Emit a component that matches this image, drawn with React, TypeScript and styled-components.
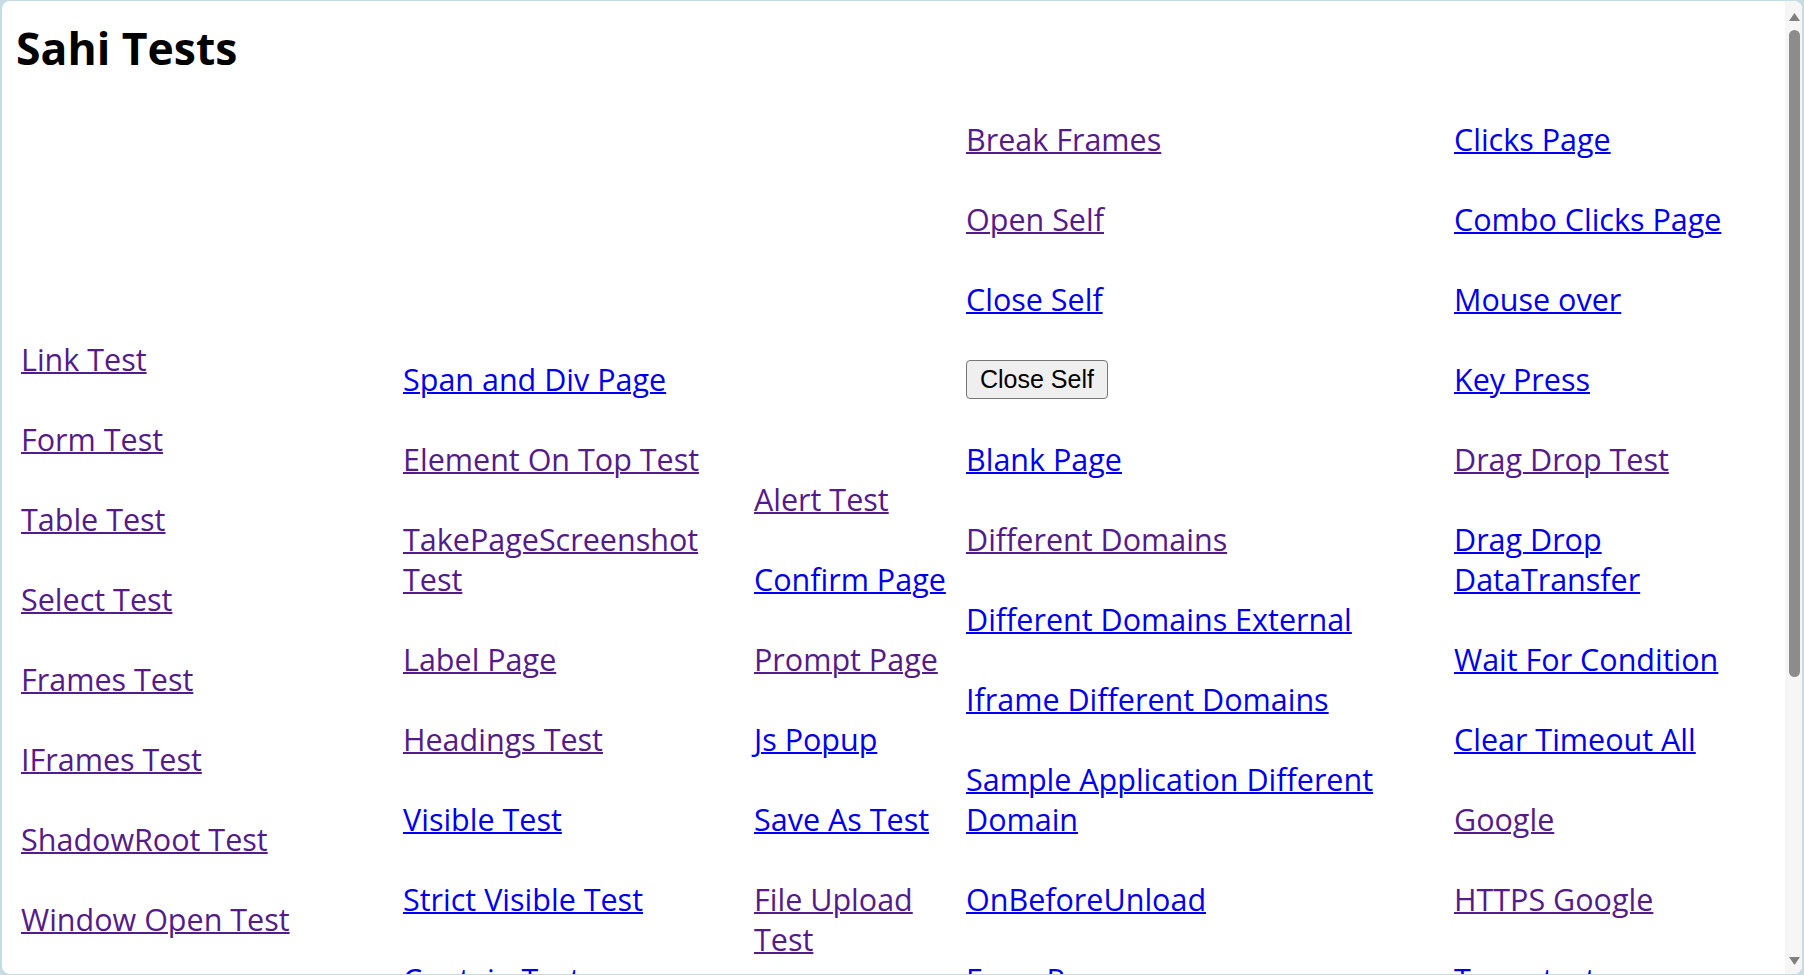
import React from "react";
import styled, { createGlobalStyle } from "styled-components";

const GlobalStyle = createGlobalStyle`
  html, body {
    margin: 0;
    padding: 0;
    height: 100%;
    overflow: hidden;
    background: #c6dce0;
  }
  #root {
    height: 100%;
  }
`;

const Frame = styled.div`
  box-sizing: border-box;
  height: 100vh;
  padding: 1px 2px 1px 2px;
`;

const Window = styled.div`
  height: 100%;
  display: flex;
  background: #ffffff;
  border-radius: 8px;
  overflow: hidden;
`;

const Page = styled.main`
  flex: 1;
  min-width: 0;
  overflow: hidden;
  padding-left: 14px;
  font-family: "Open Sans", "Noto Sans", sans-serif;
`;

const Title = styled.h1`
  margin: 20px 0 0;
  font-size: 44.5px;
  line-height: 54px;
  font-weight: 700;
  color: #000000;
`;

const LinkGrid = styled.div`
  display: grid;
  grid-template-columns: 382px 351px 212px 488px 1fr;
  align-items: start;
  margin-top: 44px;
  padding-left: 5px;
`;

const Column = styled.ul<{ $top: number }>`
  list-style: none;
  margin: 0;
  padding: ${(p) => p.$top}px 0 0;
  display: flex;
  flex-direction: column;
  gap: 40px;
`;

const Item = styled.li`
  font-size: 30.5px;
  line-height: 40px;
  white-space: nowrap;
`;

const TestLink = styled.a<{ $visited?: boolean }>`
  color: ${(p) => (p.$visited ? "#551a8b" : "#0000ee")};
  text-decoration: underline;
  text-decoration-thickness: 2px;
  cursor: pointer;
`;

const ButtonSlot = styled.li`
  height: 40px;
  display: flex;
  align-items: flex-start;
  padding-top: 1px;
  box-sizing: border-box;
`;

const PlainButton = styled.button`
  box-sizing: border-box;
  height: 39px;
  padding: 0 13px;
  font-family: "Liberation Sans", Arial, sans-serif;
  font-size: 25px;
  color: #000000;
  background: #efefef;
  border: 1px solid #767676;
  border-radius: 4px;
`;

const Scrollbar = styled.div`
  width: 11px;
  display: flex;
  flex-direction: column;
  padding: 12px 2px 9px 4px;
  background: #f6f6f6;
`;

const ScrollArrow = styled.svg`
  display: block;
  width: 11px;
  height: 8px;
`;

const ScrollThumb = styled.div`
  margin-top: 9px;
  height: 647px;
  border-radius: 6px;
  background: #8c8c8c;
`;

const ScrollSpacer = styled.div`
  flex: 1;
`;

type Entry =
  | { kind: "link"; lines: string[]; visited?: boolean }
  | { kind: "button"; label: string };

const L = (text: string, visited = false): Entry => ({
  kind: "link",
  lines: text.split("|"),
  visited,
});

const columns: { top: number; items: Entry[] }[] = [
  {
    top: 220,
    items: [
      L("Link Test", true),
      L("Form Test", true),
      L("Table Test", true),
      L("Select Test", true),
      L("Frames Test", true),
      L("IFrames Test", true),
      L("ShadowRoot Test", true),
      L("Window Open Test", true),
    ],
  },
  {
    top: 240,
    items: [
      L("Span and Div Page"),
      L("Element On Top Test", true),
      L("TakePageScreenshot|Test", true),
      L("Label Page", true),
      L("Headings Test", true),
      L("Visible Test"),
      L("Strict Visible Test"),
      L("Contain Test"),
    ],
  },
  {
    top: 360,
    items: [
      L("Alert Test", true),
      L("Confirm Page"),
      L("Prompt Page", true),
      L("Js Popup"),
      L("Save As Test"),
      L("File Upload|Test", true),
    ],
  },
  {
    top: 0,
    items: [
      L("Break Frames", true),
      L("Open Self", true),
      L("Close Self"),
      { kind: "button", label: "Close Self" },
      L("Blank Page"),
      L("Different Domains", true),
      L("Different Domains External"),
      L("Iframe Different Domains"),
      L("Sample Application Different|Domain"),
      L("OnBeforeUnload"),
      L("Error Pages"),
    ],
  },
  {
    top: 0,
    items: [
      L("Clicks Page"),
      L("Combo Clicks Page"),
      L("Mouse over"),
      L("Key Press"),
      L("Drag Drop Test", true),
      L("Drag Drop|DataTransfer"),
      L("Wait For Condition"),
      L("Clear Timeout All"),
      L("Google", true),
      L("HTTPS Google", true),
      L("Temp test"),
    ],
  },
];

export default function App() {
  return (
    <>
      <GlobalStyle />
      <Frame>
        <Window>
          <Page>
            <Title>Sahi Tests</Title>
            <LinkGrid>
              {columns.map((col, ci) => (
                <Column key={ci} $top={col.top}>
                  {col.items.map((entry, ii) =>
                    entry.kind === "button" ? (
                      <ButtonSlot key={ii}>
                        <PlainButton type="button">{entry.label}</PlainButton>
                      </ButtonSlot>
                    ) : (
                      <Item key={ii}>
                        <TestLink href="#" $visited={entry.visited}>
                          {entry.lines.map((line, li) => (
                            <React.Fragment key={li}>
                              {li > 0 && <br />}
                              {line}
                            </React.Fragment>
                          ))}
                        </TestLink>
                      </Item>
                    )
                  )}
                </Column>
              ))}
            </LinkGrid>
          </Page>
          <Scrollbar>
            <ScrollArrow viewBox="0 0 11 8">
              <polygon points="5.5,0 11,8 0,8" fill="#808080" />
            </ScrollArrow>
            <ScrollThumb />
            <ScrollSpacer />
            <ScrollArrow viewBox="0 0 11 8">
              <polygon points="0,0 11,0 5.5,8" fill="#808080" />
            </ScrollArrow>
          </Scrollbar>
        </Window>
      </Frame>
    </>
  );
}
